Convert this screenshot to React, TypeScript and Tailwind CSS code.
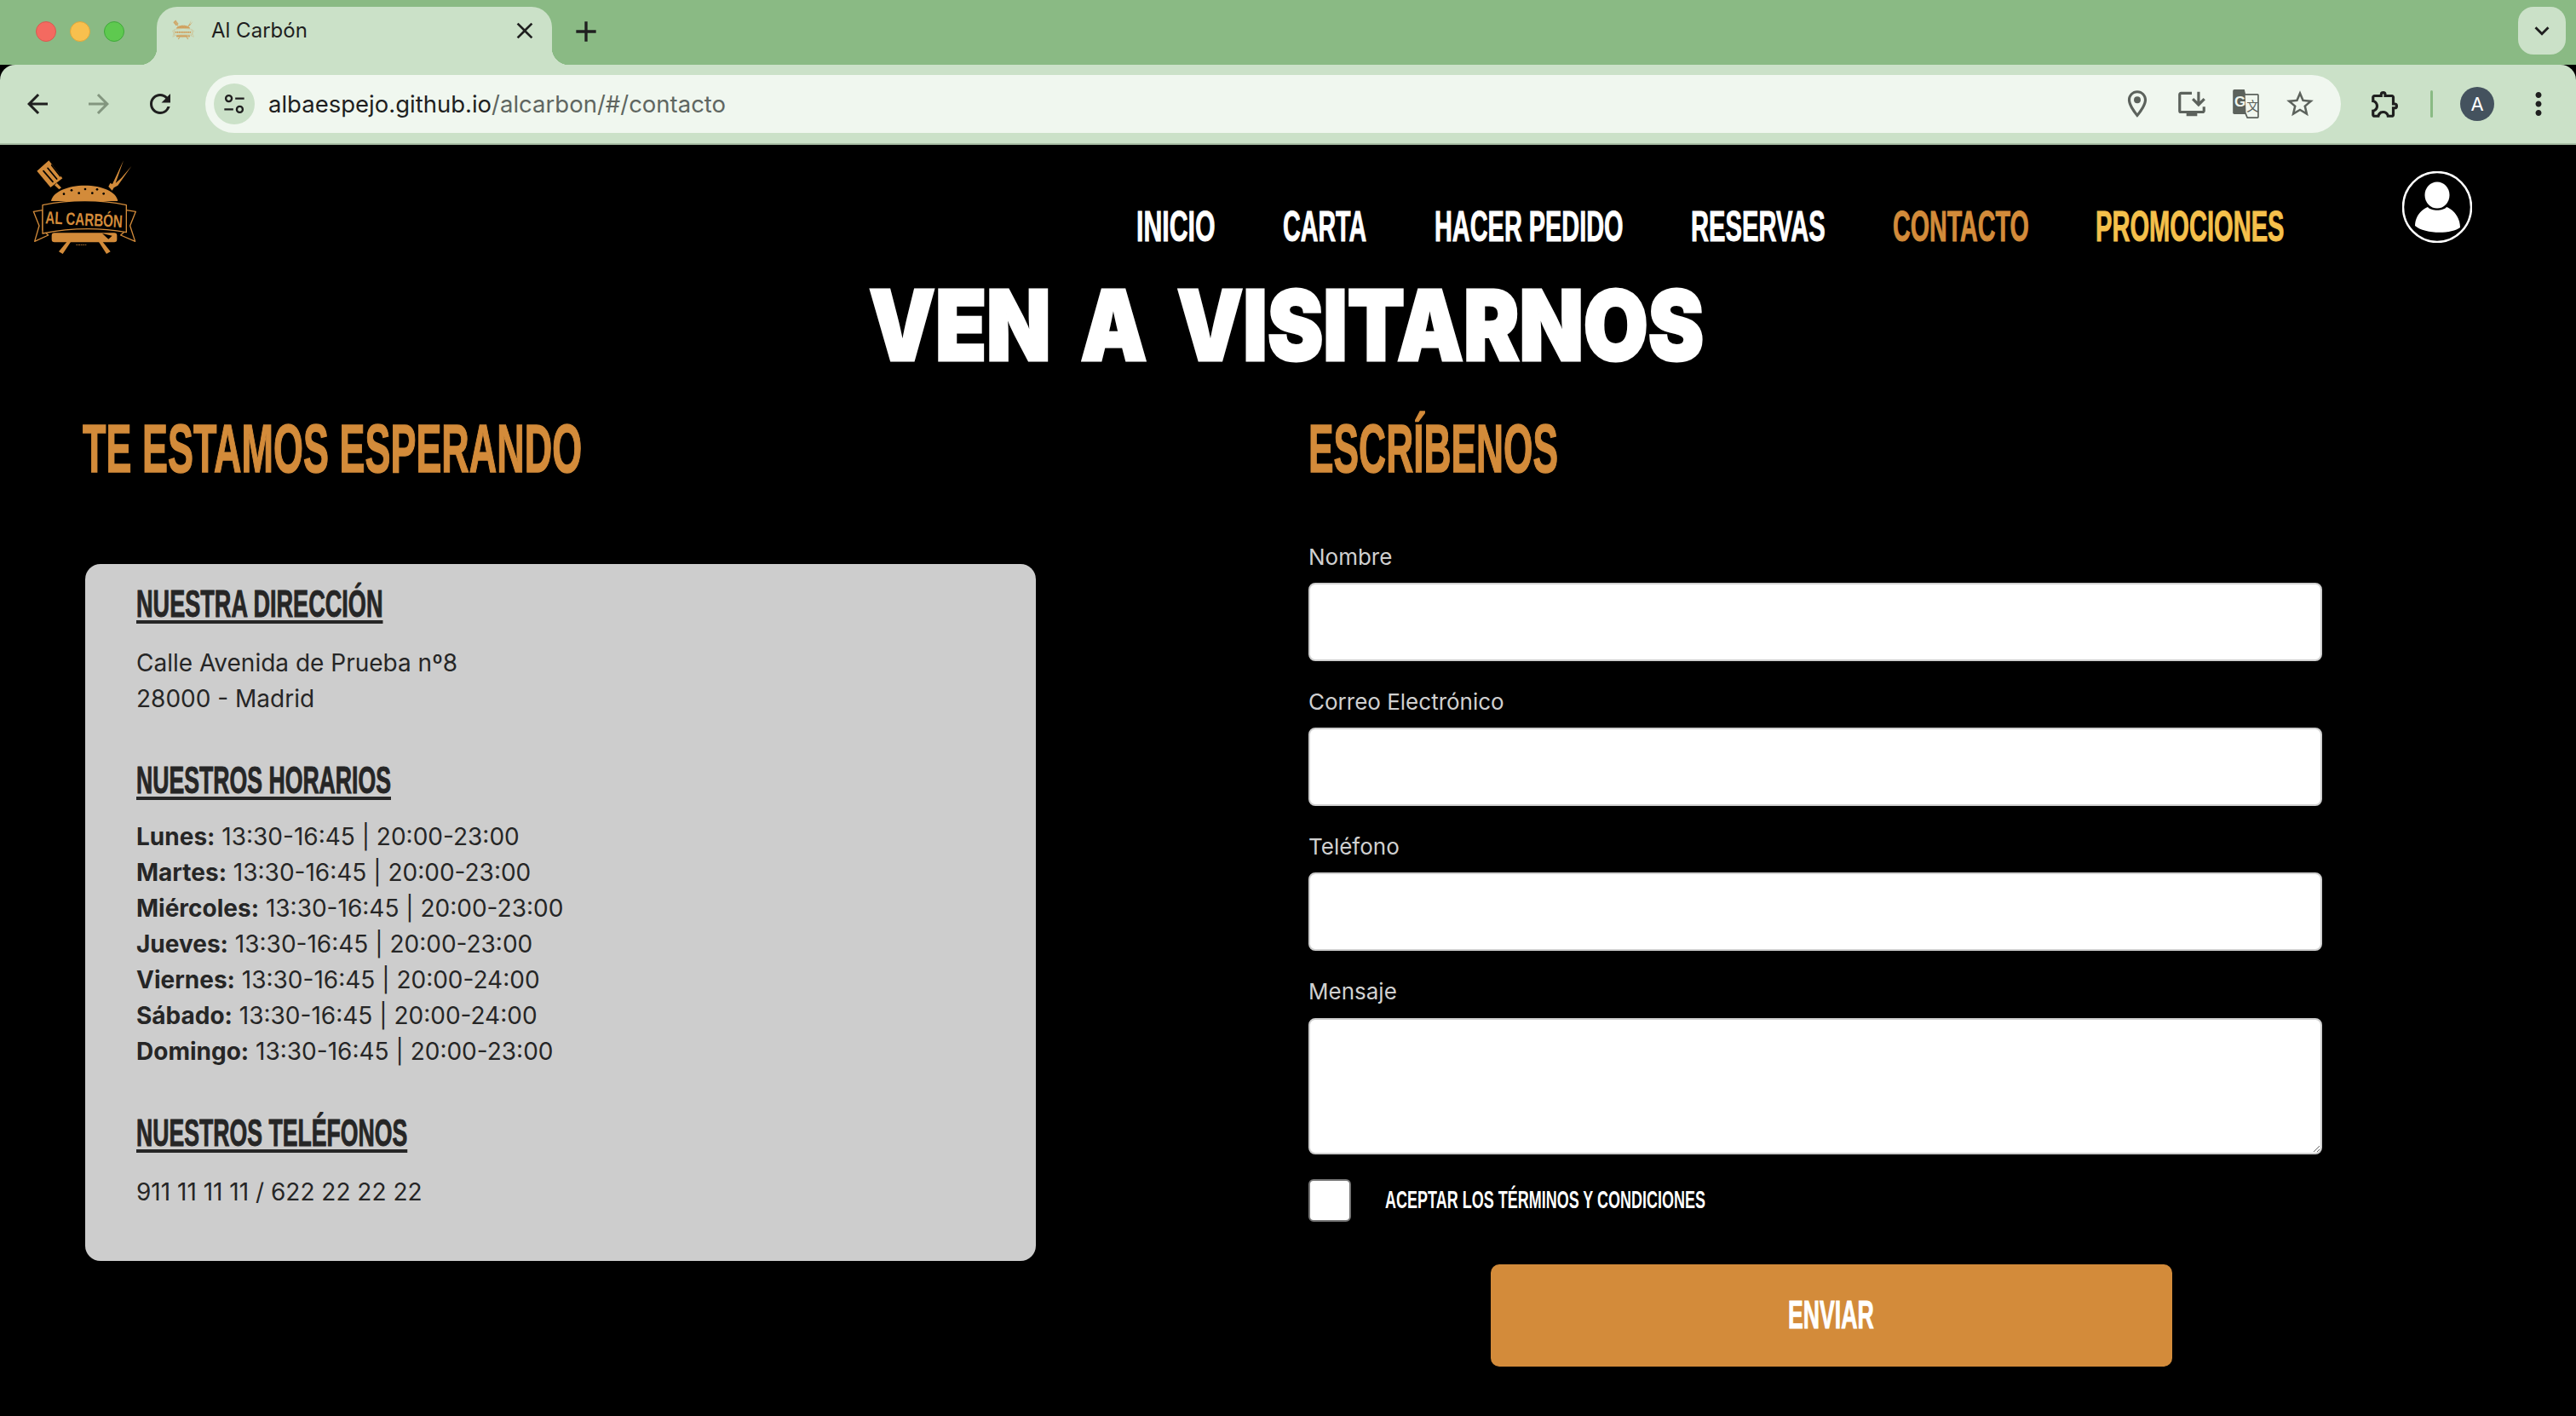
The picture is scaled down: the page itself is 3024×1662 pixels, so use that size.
import React from "react";
import { MdOutlineLocationOn, MdOutlineInstallDesktop, MdOutlineStarBorder, MdOutlineExtension, MdArrowBack, MdArrowForward, MdRefresh, MdClose, MdAdd, MdKeyboardArrowDown, MdMoreVert } from "react-icons/md";

const cond = "inline-block origin-left whitespace-nowrap font-['Liberation_Sans',sans-serif] font-bold";

function Logo({ className, box = "0 0 510 450", ink = "#000", tiny = true }: { className: string; box?: string; ink?: string; tiny?: boolean }) {
  const o = "#d38b3a";
  return (
    <svg viewBox={box} className={className}>
      <g fill={o}>
        <path d="M70 92 112 55 160 118 118 150Z" />
        <path d="M132 142l8-8 16 17-8 6Z" />
        <path d="M322 147 l6-12 8 3 39-83-28 80 20-18 36-42-48 68-14 8-6 10Z" />
        <path d="M120 198C125 165 180 143 238 143 300 143 350 165 355 198Z" />
        <rect x="122" y="310" width="230" height="33" rx="10" />
        <path d="M175 342h14l-28 42-14-8Z" />
        <path d="M288 342h14l27 34-14 8Z" />
      </g>
      <g stroke={ink} strokeWidth="5" strokeLinecap="round">
        <path d="M93 92 126 130M108 82 140 120M122 72 152 110" />
      </g>
      <g fill={ink}>
        <circle cx="165" cy="173" r="4" /><circle cx="192" cy="160" r="4" /><circle cx="218" cy="170" r="4" /><circle cx="240" cy="156" r="4" /><circle cx="265" cy="170" r="4" /><circle cx="282" cy="157" r="4" /><circle cx="305" cy="172" r="4" />
      </g>
      <g fill={ink} stroke={o} strokeWidth="4" strokeLinejoin="round">
        <path d="M58 235 90 230 90 300 110 318 62 340 78 285Z" />
        <path d="M418 235 385 230 385 300 365 318 416 340 398 285Z" />
        <path d="M90 212Q240 182 385 212L385 308Q240 282 90 312Z" />
      </g>
      <path d="M300 312 335 320 322 332Z" fill={ink} />
      {tiny ? (
        <text x="236" y="284" textAnchor="middle" fill={o} fontFamily="'Liberation Sans',sans-serif" fontWeight="700" fontSize="62" textLength="272" lengthAdjust="spacingAndGlyphs" transform="rotate(3 236 262)">AL CARBÓN</text>
      ) : (
        <path d="M105 262H370" stroke={o} strokeWidth="30" strokeDasharray="22 8" />
      )}
      <path d="M208 352H244" stroke={o} strokeWidth="3" strokeDasharray="6 2" opacity="0.8" />
    </svg>
  );
}

function Nav({ w, c, t, s }: { w: string; c: string; t: string; s: string }) {
  return (
    <a className={`block h-[50px] ${w}`}>
      <span className={`${cond} ${s} text-[50px] leading-[50px] [-webkit-text-stroke:1px] ${c}`}>{t}</span>
    </a>
  );
}

function H3({ t, w, s }: { t: string; w: string; s: string }) {
  return (
    <div className={`h-[45px] ${w}`}>
      <span className={`${cond} ${s} text-[45px] leading-[45px] underline decoration-4 underline-offset-[4px] [-webkit-text-stroke:1px]`}>{t}</span>
    </div>
  );
}

const hours: [string, string][] = [
  ["Lunes:", "13:30-16:45 | 20:00-23:00"],
  ["Martes:", "13:30-16:45 | 20:00-23:00"],
  ["Miércoles:", "13:30-16:45 | 20:00-23:00"],
  ["Jueves:", "13:30-16:45 | 20:00-23:00"],
  ["Viernes:", "13:30-16:45 | 20:00-24:00"],
  ["Sábado:", "13:30-16:45 | 20:00-24:00"],
  ["Domingo:", "13:30-16:45 | 20:00-23:00"],
];

function Field({ label, first }: { label: string; first?: boolean }) {
  return (
    <div className={first ? "" : "mt-[30px]"}>
      <label className="block h-[36px] text-[26px] leading-[36px] text-[#d0d0d0]">{label}</label>
      <input type="text" className="mt-[12px] block h-[92px] w-[1190px] rounded-lg border-2 border-[#cfcfcf] bg-white" />
    </div>
  );
}

export default function App() {
  return (
    <div className="h-[1662px] w-[3024px] overflow-hidden bg-black font-['Inter',sans-serif]">
      {/* browser chrome */}
      <div className="flex h-[76px] items-start bg-[#8aba84] pt-[8px]">
        <div className="ml-[42px] mt-[17px] flex gap-[16px]">
          <span className="size-[24px] rounded-full border border-[#d85a50] bg-[#f46a60]" />
          <span className="size-[24px] rounded-full border border-[#dda63a] bg-[#f8c04e]" />
          <span className="size-[24px] rounded-full border border-[#3fa83a] bg-[#5ec94f]" />
        </div>
        <div className="relative ml-[38px] flex h-[68px] w-[464px] items-start rounded-t-[24px] bg-[#cbe1c8] pl-[18px] pt-[15px]">
          <span className="absolute -left-[20px] bottom-0 size-[20px] bg-[radial-gradient(circle_at_0_0,#8aba84_20px,#cbe1c8_20.5px)]" />
          <span className="absolute -right-[20px] bottom-0 size-[20px] bg-[radial-gradient(circle_at_100%_0,#8aba84_20px,#cbe1c8_20.5px)]" />
          <Logo className="h-[24px] w-[26px] opacity-75" box="50 50 375 340" ink="#cbe1c8" tiny={false} />
          <span className="ml-[20px] mt-[-3px] text-[24px] leading-[32px] text-[#1f1f1f]">Al Carbón</span>
          <MdClose className="absolute left-[416px] top-[12px] text-[#1f1f1f]" size={32} />
        </div>
        <MdAdd className="ml-[20px] mt-[9px] text-[#1f1f1f]" size={40} />
        <div className="ml-auto mr-[12px] flex h-[56px] w-[56px] items-center justify-center rounded-[18px] bg-[#cbe1c8]">
          <MdKeyboardArrowDown size={34} className="text-[#1f1f1f]" />
        </div>
      </div>
      <div className="flex h-[94px] items-start rounded-t-[18px] border-b-2 border-[#a9bfa6] bg-[#cbe1c8] pt-[12px]">
        <div className="ml-[26px] mt-[16px] flex w-[215px] shrink-0 items-center gap-[36px] text-[#1f1f1f]">
          <MdArrowBack size={36} />
          <MdArrowForward size={36} className="text-[#83967f]" />
          <MdRefresh size={36} />
        </div>
        <div className="flex h-[68px] w-[2507px] shrink-0 items-center rounded-full bg-[#f0f7ef] pl-[10px]">
          <span className="flex size-[48px] items-center justify-center rounded-full bg-[#cbe1c8]">
            <svg viewBox="0 0 24 24" className="size-[28px]" fill="none" stroke="#1f1f1f" strokeWidth="2">
              <circle cx="6.5" cy="6.5" r="3" /><path d="M13 6.5h9M2 17.5h9" /><circle cx="17.5" cy="17.5" r="3" />
            </svg>
          </span>
          <span className="ml-[16px] text-[27.5px] leading-[40px] text-[#1f1f1f]">
            albaespejo.github.io<span className="text-[#5f6661]">/alcarbon/#/contacto</span>
          </span>
          <div className="ml-auto mr-[29px] flex items-center gap-[26px] text-[#5c625c]">
            <MdOutlineLocationOn size={38} />
            <MdOutlineInstallDesktop size={38} />
            <svg viewBox="0 0 36 40" className="mx-[2px] h-[34px] w-[33px]">
              <path d="M2 0h14l8 34H2a2 2 0 0 1-2-2V2a2 2 0 0 1 2-2Z" fill="#5c625c" />
              <path d="M16 7h18a1 1 0 0 1 1 1v30a1 1 0 0 1-1 1H20L17 32Z" fill="#f0f7ef" stroke="#5c625c" strokeWidth="2" />
              <text x="2" y="23" fontSize="20" fontWeight="700" fill="#f0f7ef" fontFamily="'Liberation Sans',sans-serif">G</text>
              <text x="19" y="29" fontSize="17" fill="#5c625c" fontFamily="'Noto Sans CJK SC',sans-serif">文</text>
            </svg>
            <MdOutlineStarBorder size={38} />
          </div>
        </div>
        <MdOutlineExtension size={38} className="ml-[33px] mt-[15px] text-[#1f1f1f]" />
        <span className="ml-[34px] mt-[18px] h-[32px] w-[3px] rounded bg-[#8aba84]" />
        <span className="ml-[32px] mt-[14px] flex size-[40px] items-center justify-center rounded-full bg-[#44525e] text-[22px] text-white">A</span>
        <MdMoreVert size={42} className="ml-[31px] mt-[13px] text-[#1f1f1f]" />
      </div>

      {/* page */}
      <header className="flex h-[155px]">
        <Logo className="ml-[20px] h-[150px] w-[170px]" />
        <nav className="ml-[1144px] flex gap-20 pt-[71px]">
          <Nav w="w-[92px]" s="scale-x-[.605]" c="text-white" t="INICIO" />
          <Nav w="w-[98px]" s="scale-x-[.573]" c="text-white" t="CARTA" />
          <Nav w="w-[221px]" s="scale-x-[.578]" c="text-white" t="HACER PEDIDO" />
          <Nav w="w-[157px]" s="scale-x-[.583]" c="text-white" t="RESERVAS" />
          <Nav w="w-[158px]" s="scale-x-[.573]" c="text-[#d38b3a]" t="CONTACTO" />
          <Nav w="w-[223px]" s="scale-x-[.582]" c="text-[#f5c04b]" t="PROMOCIONES" />
        </nav>
        <div className="ml-[137px] mt-[31px]">
          <svg viewBox="0 0 82 84" className="h-[84px] w-[82px]">
            <ellipse cx="41" cy="42" rx="40" ry="41" fill="none" stroke="#fff" strokeWidth="2.5" />
            <ellipse cx="41" cy="28" rx="14.5" ry="15.5" fill="#fff" />
            <path d="M15 64C15 52 24 44 30 42 34 47 48 47 52 42 60 45 68 54 68 66 58 74 26 74 15 64Z" fill="#fff" />
          </svg>
        </div>
      </header>

      <h1 className="ml-[1020px] h-[114px] text-[114px] font-black leading-[114px] text-white">
        <span className="inline-block origin-left scale-x-[.86] whitespace-nowrap [-webkit-text-stroke:3px_white] [word-spacing:18px]">VEN A VISITARNOS</span>
      </h1>

      <main className="flex">
        <section className="w-[1536px] pl-[97px] pt-[48px]">
          <div className="h-[80px]">
            <span className={`${cond} scale-x-[.562] text-[80px] leading-[80px] text-[#d38b3a] [-webkit-text-stroke:1.5px]`}>TE ESTAMOS ESPERANDO</span>
          </div>
          <div className="ml-[3px] mt-[95px] h-[818px] w-[1116px] rounded-[18px] bg-[#cdcdcd] pl-[60px] pt-[24px] text-[28px] leading-[42px] text-[#262626]">
            <H3 t="NUESTRA DIRECCIÓN" w="w-[290px]" s="scale-x-[.602]" />
            <p className="mt-[26px]">Calle Avenida de Prueba nº8<br />28000 - Madrid</p>
            <div className="mt-[52px]"><H3 t="NUESTROS HORARIOS" w="w-[300px]" s="scale-x-[.592]" /></div>
            <div className="mt-[23px]">
              {hours.map(([d, h]) => (
                <p key={d}><b className="font-bold">{d}</b> {h}</p>
              ))}
            </div>
            <div className="mt-[52px]"><H3 t="NUESTROS TELÉFONOS" w="w-[318px]" s="scale-x-[.592]" /></div>
            <p className="mt-[26px]">911 11 11 11 / 622 22 22 22</p>
          </div>
        </section>
        <section className="pt-[48px]">
          <div className="h-[80px]">
            <span className={`${cond} scale-x-[.554] text-[80px] leading-[80px] text-[#d38b3a] [-webkit-text-stroke:1.5px]`}>ESCRÍBENOS</span>
          </div>
          <form className="mt-[69px]">
            <Field first label="Nombre" />
            <Field label="Correo Electrónico" />
            <Field label="Teléfono" />
            <div className="mt-[30px]">
              <label className="block h-[36px] text-[26px] leading-[36px] text-[#d0d0d0]">Mensaje</label>
              <textarea className="mt-[13px] block h-[160px] w-[1190px] rounded-lg border-2 border-[#cfcfcf] bg-white" />
            </div>
            <div className="mt-[29px] flex items-center">
              <input type="checkbox" className="size-[50px] appearance-none rounded-md border-2 border-[#767676] bg-white" />
              <span className={`${cond} ml-[40px] mt-[-2px] scale-x-[.6] text-[30px] leading-[36px] text-white`}>ACEPTAR LOS TÉRMINOS Y CONDICIONES</span>
            </div>
            <button type="button" className="ml-[214px] mt-[50px] flex h-[120px] w-[800px] items-center justify-center rounded-[10px] bg-[#d38b3a] text-white">
              <span className="mt-[-3px] flex w-[102px] justify-start">
                <span className={`${cond} scale-x-[.58] text-[46px] leading-[46px] [-webkit-text-stroke:1px]`}>ENVIAR</span>
              </span>
            </button>
          </form>
        </section>
      </main>
    </div>
  );
}
